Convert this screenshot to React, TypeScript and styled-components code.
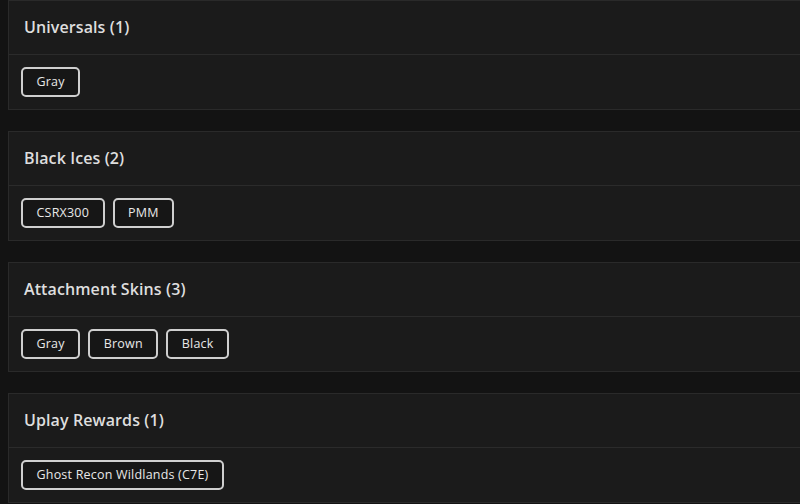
import React from "react";
import styled, { createGlobalStyle } from "styled-components";

const Global = createGlobalStyle`
  html, body { margin: 0; padding: 0; background: #131313; overflow: hidden; }
  body { font-family: "Open Sans", "Noto Sans", sans-serif; }
`;

const Page = styled.div`
  display: flex;
  flex-direction: column;
  gap: 21px;
  padding: 0 0 0 8px;
  width: 800px;
  box-sizing: border-box;
`;

const Card = styled.section`
  width: 820px;
  background: #1b1b1b;
  border: 1px solid #2a2a2a;
  box-sizing: border-box;
`;

const Header = styled.div`
  height: 54px;
  display: flex;
  align-items: center;
  padding: 0 15px 2px;
  box-sizing: border-box;
  border-bottom: 1px solid #2b2b2b;
  color: #dedede;
  font-size: 16px;
  font-weight: 600;
  letter-spacing: 0.1px;
`;

const Body = styled.div`
  display: flex;
  gap: 8px;
  padding: 12px;
`;

const Tag = styled.button`
  height: 30px;
  padding: 0 13.5px 1px;
  background: #161616;
  color: #e8e8e8;
  border: 2px solid #cfcfcf;
  border-radius: 5px;
  font-family: "Open Sans", "Noto Sans", sans-serif;
  font-size: 12.5px;
  letter-spacing: 0.2px;
  cursor: pointer;
`;

const groups = [
  { title: "Universals", items: ["Gray"] },
  { title: "Black Ices", items: ["CSRX300", "PMM"] },
  { title: "Attachment Skins", items: ["Gray", "Brown", "Black"] },
  { title: "Uplay Rewards", items: ["Ghost Recon Wildlands (C7E)"] },
];

export default function App() {
  return (
    <>
      <Global />
      <Page>
        {groups.map((g) => (
          <Card key={g.title}>
            <Header>
              {g.title} ({g.items.length})
            </Header>
            <Body>
              {g.items.map((it, i) => (
                <Tag key={i}>{it}</Tag>
              ))}
            </Body>
          </Card>
        ))}
      </Page>
    </>
  );
}
